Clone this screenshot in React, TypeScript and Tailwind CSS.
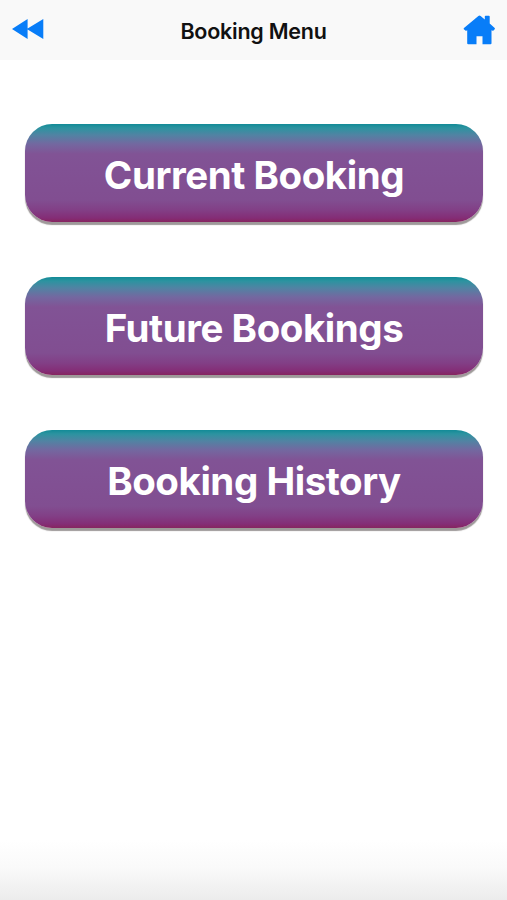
const menuItems = ["Current Booking", "Future Bookings", "Booking History"];

const RewindIcon = () => (
  <svg width="32" height="22" viewBox="0 0 32 22" fill="#087DF8" aria-hidden="true">
    <path d="M0 11L15.6 1V10.6L31.3 1V21L15.6 11.4V21Z" />
  </svg>
);

const HomeIcon = () => (
  <svg width="33" height="30" viewBox="0 0 33 30" fill="#087DF8" aria-hidden="true">
    <path d="M16.5 0.5Q17 0.5 17.6 1L21.8 4.5V1.5Q21.8 0.8 22.6 0.8H25.9Q26.7 0.8 26.7 1.5V8.6L31.7 13Q32.2 13.6 31.7 14.2L30.5 15.6Q30 16 29.2 15.6L28.5 15.2V28.2Q28.5 29.2 27.5 29.2H19.5V21.2H13.5V29.2H5.2Q4.2 29.2 4.2 28.2V15.2L3.7 15.6Q2.9 16 2.4 15.6L0.8 14.2Q0.4 13.6 1 13L15.4 1Q16 0.5 16.5 0.5Z" />
  </svg>
);

const MenuButton = ({ title }: { title: string }) => (
  <button
    type="button"
    className="flex h-[98px] w-full items-center justify-center rounded-[27px] bg-[linear-gradient(to_bottom,#128b97_0px,#2c93a0_4px,#5183a3_11px,#7368a0_20px,#815395_30px,#815194_45px,#814e91_76px,#823f86_86px,#842d76_94px,#86245f_98px)] shadow-[0_2.5px_1px_#9e9999]"
  >
    <span className="pt-1 text-[38.5px] leading-none font-bold tracking-[-0.45px] text-white">{title}</span>
  </button>
);

const App = () => {
  return (
    <div className="flex h-screen w-full flex-col bg-white font-[Inter,'Liberation_Sans',sans-serif]">
      <header className="flex h-[60px] shrink-0 items-start justify-between bg-[#f9f9f9] pr-[11px] pl-3">
        <button type="button" aria-label="Back" className="pt-[18px]">
          <RewindIcon />
        </button>
        <h1 className="pt-5 text-[21.5px] leading-[22px] font-semibold tracking-[-0.25px] text-[#111]">Booking Menu</h1>
        <button type="button" aria-label="Home" className="pt-[15px]">
          <HomeIcon />
        </button>
      </header>

      <main className="flex flex-1 flex-col gap-[55px] pt-16 pr-6 pl-[25px]">
        {menuItems.map((title) => (
          <MenuButton key={title} title={title} />
        ))}
      </main>

      {/* Bottom fade */}
      <div className="h-[60px] shrink-0 bg-[linear-gradient(to_bottom,#ffffff,#fafafa_45%,#ececec)]" />
    </div>
  );
};

export default App;
